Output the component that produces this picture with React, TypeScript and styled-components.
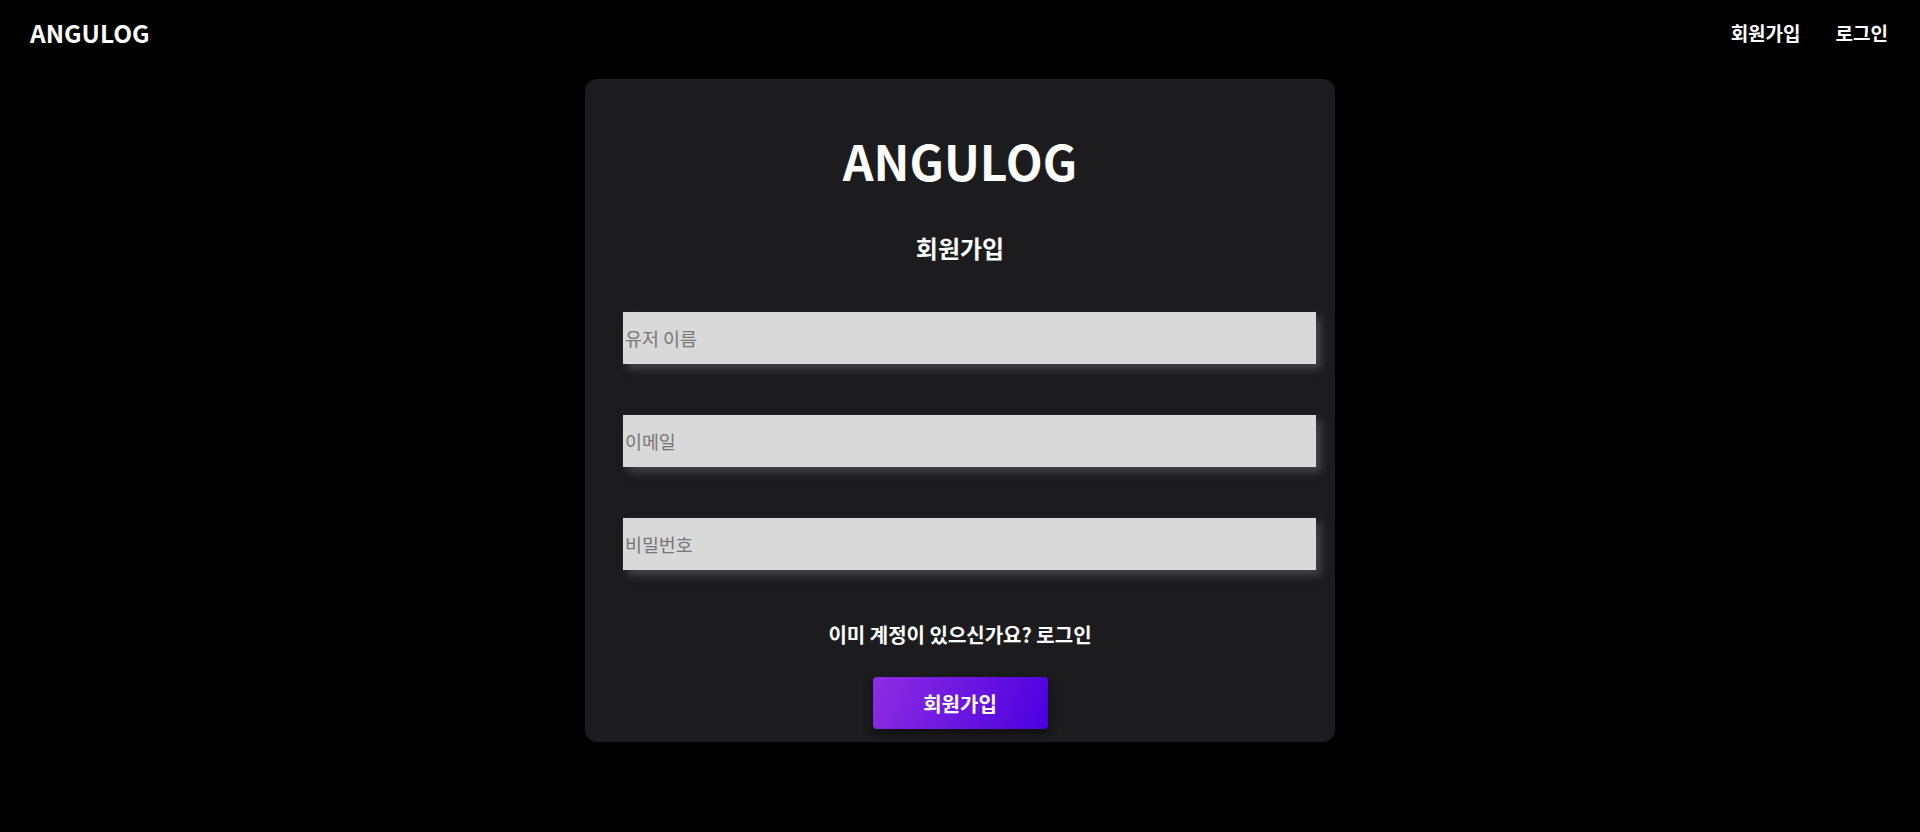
import React from "react";
import styled, { createGlobalStyle } from "styled-components";

const GlobalStyle = createGlobalStyle`
  html, body {
    margin: 0;
    padding: 0;
    background: #000;
    font-family: "Noto Sans CJK KR", "Noto Sans", sans-serif;
    color: #fff;
  }
  * { box-sizing: border-box; }
`;

const Page = styled.div`
  min-height: 832px;
  background: #000;
  display: flex;
  flex-direction: column;
`;

const Header = styled.header`
  height: 64px;
  display: flex;
  align-items: center;
  justify-content: space-between;
  padding: 0 32px 0 30px;
`;

const Logo = styled.div`
  font-size: 24.5px;
  font-weight: 700;
  color: #fff;
`;

const Nav = styled.nav`
  display: flex;
  align-items: center;
  gap: 35px;
`;

const NavLink = styled.a`
  font-size: 19px;
  font-weight: 700;
  color: #fff;
  text-decoration: none;
  cursor: pointer;
`;

const Main = styled.main`
  display: flex;
  justify-content: center;
  padding-top: 15px;
`;

const Card = styled.form`
  width: 750px;
  height: 663px;
  background: #1c1c1e;
  border-radius: 12px;
  padding-top: 46px;
  display: flex;
  flex-direction: column;
  align-items: center;
`;

const Title = styled.h1`
  margin: 0;
  font-size: 48px;
  font-weight: 700;
  line-height: 70px;
  color: #fff;
`;

const Subtitle = styled.h2`
  margin: 37px 0 0 0;
  font-size: 24px;
  font-weight: 700;
  line-height: 32px;
  color: #fff;
`;

const Fields = styled.div`
  align-self: stretch;
  margin-top: 48px;
  padding-left: 38px;
  display: flex;
  flex-direction: column;
  gap: 51px;
`;

const Input = styled.input`
  width: 693px;
  height: 52px;
  border: none;
  outline: none;
  background: #d9d9d9;
  padding: 0 2px;
  font-family: "Noto Sans CJK KR", "Noto Sans", sans-serif;
  font-size: 18.4px;
  color: #222;
  box-shadow: 5px 5px 8px rgba(96, 97, 102, 0.6);
  &::placeholder {
    color: #777;
  }
`;

const AccountText = styled.p`
  margin: 51px 0 0 0;
  font-size: 20px;
  font-weight: 700;
  line-height: 28px;
  color: #fff;
`;

const SubmitButton = styled.button`
  margin-top: 28px;
  width: 175px;
  height: 52px;
  border: none;
  border-radius: 4px;
  background: linear-gradient(110deg, #8e2de2 0%, #4a00e0 100%);
  color: #fff;
  font-family: "Noto Sans CJK KR", "Noto Sans", sans-serif;
  font-size: 20px;
  font-weight: 700;
  box-shadow: 0 4px 10px rgba(0, 0, 0, 0.55);
  cursor: pointer;
`;

export default function App() {
  return (
    <>
      <GlobalStyle />
      <Page>
        <Header>
          <Logo>ANGULOG</Logo>
          <Nav>
            <NavLink>회원가입</NavLink>
            <NavLink>로그인</NavLink>
          </Nav>
        </Header>
        <Main>
          <Card onSubmit={(e) => e.preventDefault()}>
            <Title>ANGULOG</Title>
            <Subtitle>회원가입</Subtitle>
            <Fields>
              <Input type="text" placeholder="유저 이름" />
              <Input type="email" placeholder="이메일" />
              <Input type="password" placeholder="비밀번호" />
            </Fields>
            <AccountText>이미 계정이 있으신가요? 로그인</AccountText>
            <SubmitButton type="submit">회원가입</SubmitButton>
          </Card>
        </Main>
      </Page>
    </>
  );
}
